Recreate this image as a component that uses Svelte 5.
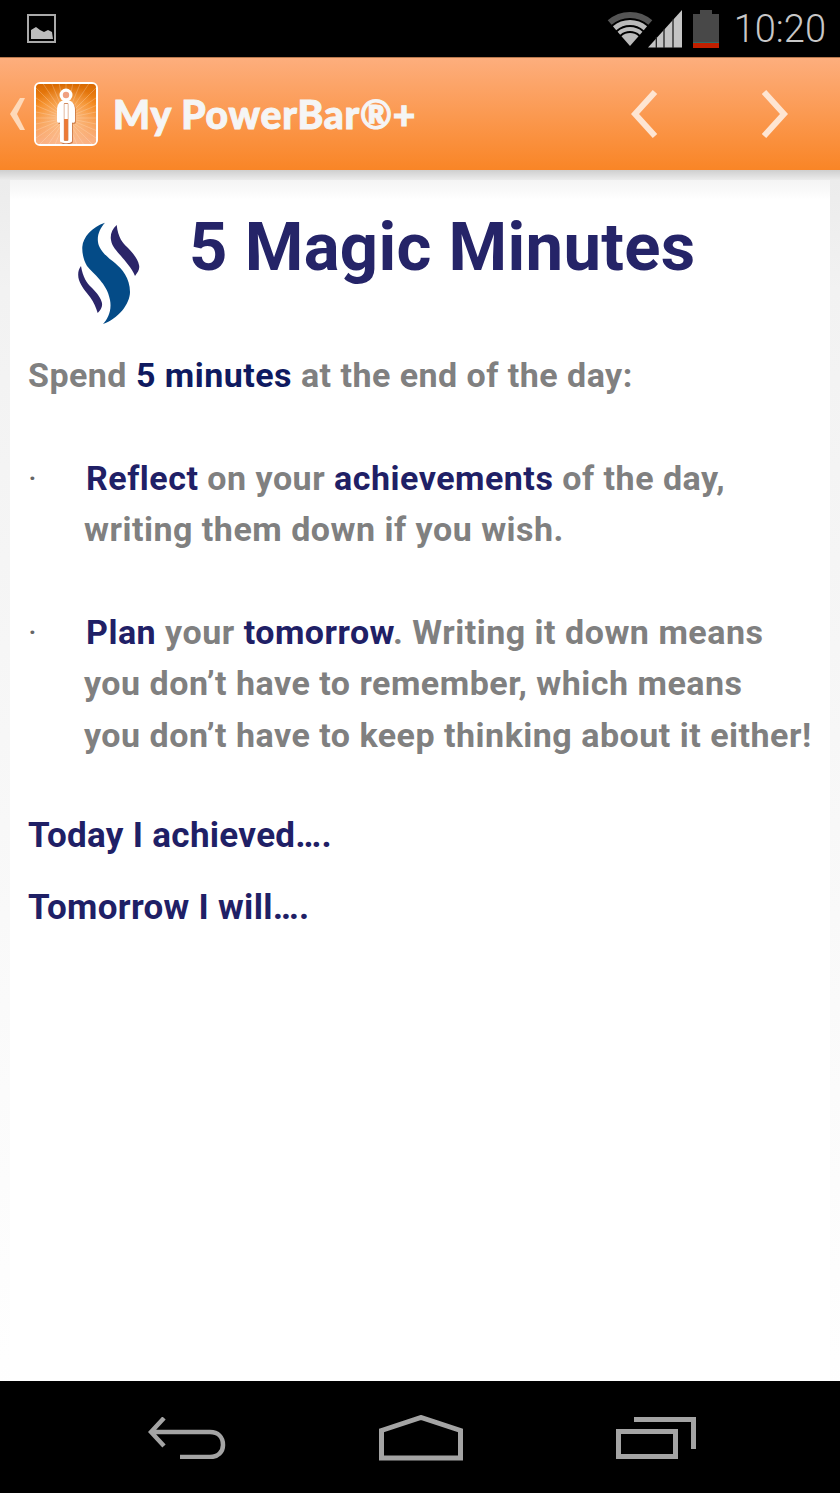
<script>
	// wifi arcs share a centre, so work the ends out from the radius
	const wifiArc = (r) => {
		const a = (41 * Math.PI) / 180;
		const dx = (r * Math.sin(a)).toFixed(2);
		const y = (35 - r * Math.cos(a)).toFixed(2);
		return `M${23 - dx} ${y}A${r} ${r} 0 0 1 ${23 + Number(dx)} ${y}`;
	};
	const wifi = [
		{ r: 31, w: 6, color: '#555' },
		{ r: 23.5, w: 5, color: '#bbb' },
		{ r: 17, w: 4, color: '#bbb' },
		{ r: 6.5, w: 13, color: '#bbb' }
	];

	const rays = Array.from({ length: 32 }, (_, i) => {
		const a = (i * Math.PI * 2) / 32;
		return { x: 30 + 60 * Math.cos(a), y: 34 + 60 * Math.sin(a) };
	});
</script>

<div class="screen">
	<header class="status">
		<svg class="pic" width="30" height="30" viewBox="0 0 30 30">
			<rect x="1" y="1" width="27" height="27" fill="none" stroke="#aaa" stroke-width="2" />
			<path d="M4 25V16L9 13L13 16L17 18L21 16L25 18L26 25Z" fill="#bbb" />
		</svg>
		<div class="status-right">
			<svg class="wifi" width="46" height="36" viewBox="0 0 46 36">
				{#each wifi as arc}
					<path d={wifiArc(arc.r)} fill="none" stroke={arc.color} stroke-width={arc.w} />
				{/each}
			</svg>
			<svg class="signal" width="34" height="38" viewBox="0 0 34 38">
				<path d="M0 37.500L34 0V37.500Z" fill="#c4c4c4" />
				<path d="M8.300 27V38M16 19V38M25 9V38" stroke="#222" stroke-width="1.300" />
			</svg>
			<div class="battery"><span class="cap"></span><span class="body"><span class="low"></span></span></div>
			<span class="clock">10:20</span>
		</div>
	</header>

	<nav class="bar">
		<div class="brand">
			<svg class="back" width="18" height="34" viewBox="0 0 18 34"><path d="M16 1H11L1 17L11 33H16L8 17Z" fill="#fed9b9" /></svg>
			<div class="appicon">
				<svg width="60" height="60" viewBox="0 0 60 60">
					<defs>
						<linearGradient id="iconbg" x1="0" y1="0" x2="0" y2="1">
							<stop offset="0" stop-color="#d96a04" />
							<stop offset="0.35" stop-color="#f58a20" />
							<stop offset="1" stop-color="#fbb48a" />
						</linearGradient>
						<radialGradient id="glow" cx="50%" cy="55%" r="55%">
							<stop offset="0" stop-color="#ffe0c4" stop-opacity="0.6" />
							<stop offset="1" stop-color="#ffe0c4" stop-opacity="0" />
						</radialGradient>
					</defs>
					<rect width="60" height="60" fill="url(#iconbg)" />
					{#each rays as ray}
						<line x1="30" y1="34" x2={ray.x} y2={ray.y} stroke="#ffe6d0" stroke-width="0.9" opacity="0.3" />
					{/each}
					<rect width="60" height="60" fill="url(#glow)" />
					<path d="M30 16C24 16 21 20 21 26V37C21 39 23 39 24 38.500V57C24 60 36 60 36 57V38.500C37 39 39 39 39 37V26C39 20 36 16 30 16Z" fill="#9c3a08" opacity="0.55" transform="translate(0.800 1)" />
					<circle cx="30" cy="11" r="6.500" fill="#fff" />
					<path d="M30 16C24 16 21 20 21 26V37C21 39 23 39 24 38.500V57C24 60 36 60 36 57V38.500C37 39 39 39 39 37V26C39 20 36 16 30 16Z" fill="#fff" />
					<rect x="27.800" y="19" width="4.600" height="38" rx="1" fill="#d08a5e" />
					<rect x="28.400" y="20" width="3.400" height="15" fill="#fff" />
					<rect x="28.400" y="35" width="3.400" height="21" fill="#ee7a35" />
					<circle cx="30" cy="11" r="3.200" fill="#f0a080" />
				</svg>
			</div>
			<span class="app-name">My PowerBar®+</span>
		</div>
		<div class="arrows">
			<svg width="27" height="48" viewBox="0 0 27 48"><path d="M24 2L4 24L24 46" fill="none" stroke="#fee5d2" stroke-width="6" /></svg>
			<svg width="27" height="48" viewBox="0 0 27 48"><path d="M3 2L23 24L3 46" fill="none" stroke="#fee5d2" stroke-width="6" /></svg>
		</div>
	</nav>

	<main class="page">
		<article class="card">
			<div class="heading">
				<svg class="logo" width="64" height="102" viewBox="0 0 64 102">
					<path d="M27 0.700C22 6 19 13 20 20C21 28 29 35 37 41C44 47 52 56 52 70C52 82 40 97 25 102C30 97 34 88 32 78C30 68 26 63 22 58C17 52 12 48 9 44C6 39 4 32 4.300 25C5 15 14 5 27 0.700Z" fill="#044b87" />
					<path d="M38.700 3C34 7 32 13 33 18C34 25 39 29 43 34C47 39 54 46 57 54C60 50 62 47 61 43C60 37 54 30 49 25C45 21 40 16 38.700 3Z" fill="#2b2569" />
					<path d="M3 44C0 48 -0.500 53 1 58C3 64 8 70 12 75C16 80 18 86 19.700 91C23 88 25 84 23.700 80C22 74 17 69 13 65C9 61 5 56 3 44Z" fill="#2b2569" />
				</svg>
				<h1>5 Magic Minutes</h1>
			</div>

			<p class="line intro">Spend <b class="dark">5 minutes</b> at the end of the day:</p>

			<div class="item first">
				<span class="dot">·</span>
				<p class="line"><b>Reflect</b> on your <b>achievements</b> of the day,<br /><span class="wrap">writing them down if you wish.</span></p>
			</div>

			<div class="item">
				<span class="dot">·</span>
				<p class="line"><b>Plan</b> your <b>tomorrow</b>. Writing it down means<br /><span class="wrap">you don’t have to remember, which means</span><br /><span class="wrap">you don’t have to keep thinking about it either!</span></p>
			</div>

			<p class="prompt first-prompt">Today I achieved….</p>
			<p class="prompt">Tomorrow I will….</p>
		</article>
	</main>

	<footer class="softkeys">
		<svg width="78" height="42" viewBox="0 0 78 42">
			<path d="M16 1L3 15L16 29M3 15H62C70 15 75 20 75 28C75 35 70 40 62 40H32" fill="none" stroke="#a4a4a4" stroke-width="4.500" />
		</svg>
		<svg width="84" height="46" viewBox="0 0 84 46">
			<path d="M2.500 15.500L42 2.500L81.500 15.500V43H2.500Z" fill="none" stroke="#a4a4a4" stroke-width="5" />
		</svg>
		<svg width="80" height="42" viewBox="0 0 80 42">
			<rect x="2.500" y="14.500" width="57" height="25" fill="none" stroke="#a4a4a4" stroke-width="5" />
			<path d="M18 2.500H77.500V32" fill="none" stroke="#a4a4a4" stroke-width="5" />
		</svg>
	</footer>
</div>

<style>
	:global(body) {
		margin: 0;
		background: #000;
	}
	.screen {
		width: 840px;
		height: 1493px;
		display: flex;
		flex-direction: column;
		font-family: Roboto, sans-serif;
		overflow: hidden;
	}
	.status {
		height: 57px;
		flex: none;
		background: #000;
		display: flex;
		align-items: center;
		justify-content: space-between;
		padding: 0 14px 0 27px;
		box-sizing: border-box;
	}
	.status-right {
		display: flex;
		align-items: center;
		height: 100%;
	}
	.wifi {
		margin-top: 1px;
		margin-left: -1px;
	}
	.signal {
		margin-left: -5px;
	}
	.battery {
		display: flex;
		flex-direction: column;
		align-items: center;
		margin-left: 11px;
		width: 26px;
	}
	.cap {
		width: 12px;
		height: 4px;
		background: #484848;
	}
	.body {
		width: 26px;
		height: 34px;
		background: #484848;
		display: flex;
		align-items: flex-end;
	}
	.low {
		width: 100%;
		height: 5px;
		background: #c02000;
		border-top: 1px solid #2f6b66;
	}
	.clock {
		font-size: 38px;
		font-weight: 300;
		color: #c8c8c8;
		margin-left: 15px;
		line-height: 1;
	}
	.bar {
		height: 113px;
		flex: none;
		box-sizing: border-box;
		border-top: 1px solid #b8794e;
		background: linear-gradient(#fdae7d, #f98526);
		display: flex;
		align-items: center;
		justify-content: space-between;
		padding: 0 52px 0 9px;
	}
	.brand {
		display: flex;
		align-items: center;
	}
	.back {
		margin-right: 7px;
	}
	.appicon {
		width: 60px;
		height: 60px;
		border: 2px solid #fff;
		border-radius: 6px;
		overflow: hidden;
		display: flex;
	}
	.app-name {
		margin-left: 15px;
		font-family: Lato, sans-serif;
		font-weight: 900;
		font-size: 39px;
		color: #f5f5f5;
		letter-spacing: 0.8px;
		-webkit-text-stroke: 1px #f5f5f5;
		line-height: 1;
	}
	.arrows {
		display: flex;
		gap: 103px;
	}
	.page {
		flex: 1;
		background: linear-gradient(#cfcfcf 0, #ececec 10px, #f2f2f2 120px, #fff 1280px);
		padding: 10px 10px 0;
		display: flex;
		min-height: 0;
	}
	.card {
		flex: 1;
		min-width: 0;
		background: linear-gradient(#f4f4f4, #fff 20px);
		padding: 0 18px 0 18px;
		box-sizing: border-box;
	}
	.heading {
		display: flex;
		align-items: flex-start;
		height: 158px;
	}
	.logo {
		margin: 42px 0 0 50px;
	}
	h1 {
		margin: 28px 0 0 47px;
		font-size: 67px;
		line-height: 78px;
		font-weight: 700;
		letter-spacing: 0.3px;
		color: #252468;
		white-space: nowrap;
	}
	.line {
		margin: 0;
		font-size: 34px;
		line-height: 51.200px;
		font-weight: 700;
		letter-spacing: 0.5px;
		color: #808080;
		white-space: nowrap;
	}
	.line b {
		color: #1f2066;
		font-weight: 700;
	}
	.line b.dark {
		color: #0f1a60;
	}
	.intro {
		margin-top: 12px;
		letter-spacing: 0.47px;
	}
	.item {
		position: relative;
		padding-left: 56px;
		margin-top: 51.500px;
	}
	.item.first {
		margin-top: 52px;
	}
	.item .line > b:first-child {
		margin-left: 2px;
	}
	.dot {
		position: absolute;
		left: 0;
		top: 0;
		font-size: 34px;
		line-height: 51px;
		color: #666;
	}
	.prompt {
		margin: 21px 0 0;
		font-size: 35px;
		line-height: 51px;
		font-weight: 700;
		letter-spacing: 0.3px;
		color: #1f2066;
	}
	.first-prompt {
		margin-top: 49px;
	}
	.softkeys {
		height: 112px;
		flex: none;
		background: #000;
		display: flex;
		align-items: center;
		padding: 2px 144px 0 148px;
		justify-content: space-between;
		box-sizing: border-box;
	}
</style>
